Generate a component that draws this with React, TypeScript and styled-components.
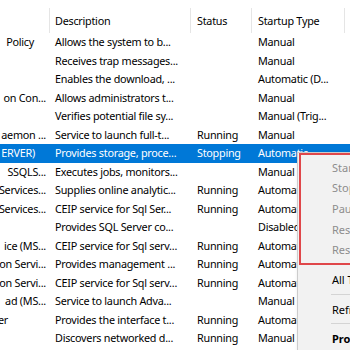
import React from "react";
import styled, { createGlobalStyle } from "styled-components";

const GlobalStyle = createGlobalStyle`
  html, body {
    margin: 0;
    padding: 0;
    background: #ffffff;
    overflow: hidden;
  }
  body {
    font-family: "Noto Sans", "Open Sans", sans-serif;
    font-size: 10.8px;
    letter-spacing: -0.25px;
    color: #000000;
  }
`;

const COLUMNS = "50px 141px 61px 93px 1fr";

type Service = {
  name: string;
  nameEnd: number;
  desc: string;
  status: string;
  startup: string;
  selected?: boolean;
};

// list is scrolled sideways, so only the tail of each name shows
const services: Service[] = [
  { name: "Policy", nameEnd: 34, desc: "Allows the system to b...", status: "", startup: "Manual" },
  { name: "", nameEnd: 46, desc: "Receives trap messages...", status: "", startup: "Manual" },
  { name: "", nameEnd: 46, desc: "Enables the download, ...", status: "", startup: "Automatic (D..." },
  { name: "on Con...", nameEnd: 46, desc: "Allows administrators t...", status: "", startup: "Manual" },
  { name: "", nameEnd: 46, desc: "Verifies potential file sy...", status: "", startup: "Manual (Trig..." },
  { name: "aemon ...", nameEnd: 46, desc: "Service to launch full-t...", status: "Running", startup: "Manual" },
  { name: "ERVER)", nameEnd: 35, desc: "Provides storage, proce...", status: "Stopping", startup: "Automatic", selected: true },
  { name: "SSQLS...", nameEnd: 46, desc: "Executes jobs, monitors...", status: "", startup: "Manual" },
  { name: "Services...", nameEnd: 46, desc: "Supplies online analytic...", status: "Running", startup: "Automatic" },
  { name: "Services...", nameEnd: 46, desc: "CEIP service for Sql Ser...", status: "Running", startup: "Automatic" },
  { name: "", nameEnd: 46, desc: "Provides SQL Server co...", status: "", startup: "Disabled" },
  { name: "ice (MS...", nameEnd: 46, desc: "CEIP service for Sql serv...", status: "Running", startup: "Automatic" },
  { name: "on Servi...", nameEnd: 46, desc: "Provides management ...", status: "Running", startup: "Automatic" },
  { name: "on Servi...", nameEnd: 46, desc: "CEIP service for Sql serv...", status: "Running", startup: "Automatic" },
  { name: "ad (MS...", nameEnd: 46, desc: "Service to launch Adva...", status: "", startup: "Manual" },
  { name: "er", nameEnd: 8, desc: "Provides the interface t...", status: "Running", startup: "Automatic" },
  { name: "", nameEnd: 46, desc: "Discovers networked d...", status: "Running", startup: "Manual" },
];

const App = () => {
  return (
    <>
      <GlobalStyle />
      <Page>
        <Header>
          <HeaderCell />
          <HeaderCell $inset={5}>Description</HeaderCell>
          <HeaderCell>Status</HeaderCell>
          <HeaderCell>Startup Type</HeaderCell>
          <HeaderCell $last />
        </Header>

        {services.map((s, i) => (
          <Row key={i} $selected={s.selected}>
            <NameCell $end={s.nameEnd}>{s.name}</NameCell>
            <Cell $inset={5}>{s.desc}</Cell>
            <Cell>{s.status}</Cell>
            <Cell>{s.startup}</Cell>
            <Cell />
          </Row>
        ))}

        <Menu>
          <Annotation />
          <MenuItem $disabled>Start</MenuItem>
          <MenuItem $disabled>Stop</MenuItem>
          <MenuItem $disabled>Pause</MenuItem>
          <MenuItem $disabled>Resume</MenuItem>
          <MenuItem $disabled>Restart</MenuItem>
          <MenuSeparator />
          <MenuItem>All Tasks</MenuItem>
          <MenuSeparator />
          <MenuItem>Refresh</MenuItem>
          <MenuSeparator />
          <MenuItem $bold>Properties</MenuItem>
        </Menu>
      </Page>
    </>
  );
};

const Page = styled.div`
  position: relative;
  width: 350px;
  height: 350px;
  padding-top: 8px;
  box-sizing: border-box;
  overflow: hidden;
`;

const Header = styled.div`
  display: grid;
  grid-template-columns: ${COLUMNS};
  height: 25px;
`;

const HeaderCell = styled.div<{ $last?: boolean; $inset?: number }>`
  display: flex;
  align-items: center;
  padding-left: ${({ $inset }) => $inset ?? 6}px;
  border-right: ${({ $last }) => ($last ? "none" : "1px solid #e5e5e5")};
  white-space: nowrap;
  overflow: hidden;
`;

const Row = styled.div<{ $selected?: boolean }>`
  display: grid;
  grid-template-columns: ${COLUMNS};
  height: 18.5px;
  line-height: 18.5px;
  background: ${({ $selected }) => ($selected ? "#0078d7" : "transparent")};
  color: ${({ $selected }) => ($selected ? "#ffffff" : "#000000")};
`;

const Cell = styled.div<{ $inset?: number }>`
  padding-left: ${({ $inset }) => $inset ?? 6}px;
  white-space: nowrap;
  overflow: hidden;
`;

const NameCell = styled.div<{ $end: number }>`
  display: flex;
  justify-content: flex-end;
  padding-right: ${({ $end }) => 50 - $end}px;
  white-space: nowrap;
  overflow: hidden;
`;

const Menu = styled.div`
  position: absolute;
  left: 297px;
  top: 152px;
  width: 170px;
  height: 230px;
  padding-top: 4.5px;
  box-sizing: border-box;
  background: #f2f2f2;
  border: 1px solid #cccccc;
  box-shadow: 2px 2px 4px rgba(0, 0, 0, 0.25);
  font-size: 11px;
  letter-spacing: 0;
`;

const Annotation = styled.div`
  position: absolute;
  left: 1px;
  top: 0;
  width: 200px;
  height: 112px;
  border: 2.5px solid #e0474a;
  box-sizing: border-box;
  pointer-events: none;
`;

const MenuItem = styled.div<{ $disabled?: boolean; $bold?: boolean }>`
  height: 20.7px;
  line-height: 20.7px;
  padding-left: 34px;
  white-space: nowrap;
  color: ${({ $disabled }) => ($disabled ? "#8d8d8d" : "#000000")};
  font-weight: ${({ $bold }) => ($bold ? 700 : 400)};
`;

const MenuSeparator = styled.div`
  height: 1px;
  margin: 3px 0 5px 33px;
  background: #d4d4d4;
`;

export default App;
